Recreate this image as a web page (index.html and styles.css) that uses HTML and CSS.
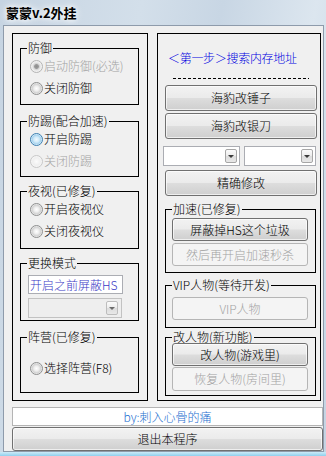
FILE: index.html
```html
<!DOCTYPE html>
<html lang="zh">
<head>
<meta charset="utf-8">
<title>蒙蒙v.2外挂</title>
<link rel="stylesheet" href="styles.css">
</head>
<body>
<div class="titlebar"><span class="title">蒙蒙v.2外挂</span></div>
<div class="client">
  <div class="panels">
    <div class="panel panel-left">
      <div class="group g1">
        <div class="legend">防御</div>
        <div class="radio dis"><span class="dot dot-checked"></span>启动防御(必选)</div>
        <div class="radio"><span class="dot"></span>关闭防御</div>
      </div>
      <div class="group g2">
        <div class="legend">防踢(配合加速)</div>
        <div class="radio"><span class="dot dot-focus"></span>开启防踢</div>
        <div class="radio dis"><span class="dot dot-dis"></span>关闭防踢</div>
      </div>
      <div class="group g3">
        <div class="legend">夜视(已修复)</div>
        <div class="radio"><span class="dot"></span>开启夜视仪</div>
        <div class="radio"><span class="dot"></span>关闭夜视仪</div>
      </div>
      <div class="group g4">
        <div class="legend">更换模式</div>
        <div class="textbox">开启之前屏蔽HS</div>
        <div class="combo combo-dis"><span class="drop drop-dis"></span></div>
      </div>
      <div class="group g5">
        <div class="legend">阵营(已修复)</div>
        <div class="radio"><span class="dot"></span>选择阵营(F8)</div>
      </div>
    </div>
    <div class="panel panel-right">
      <div class="step">＜第一步＞搜索内存地址</div>
      <div class="dash"></div>
      <div class="btn wide b1">海豹改锤子</div>
      <div class="btn wide b2">海豹改银刀</div>
      <div class="combos">
        <div class="combo combo-a"><span class="drop"></span></div>
        <div class="combo combo-b"><span class="drop"></span></div>
      </div>
      <div class="btn wide b3">精确修改</div>
      <div class="group rg speed">
        <div class="legend">加速(已修复)</div>
        <div class="btn inner first">屏蔽掉HS这个垃圾</div>
        <div class="btn inner dis">然后再开启加速秒杀</div>
      </div>
      <div class="group rg vip">
        <div class="legend">VIP人物(等待开发)</div>
        <div class="btn inner dis vipbtn">VIP人物</div>
      </div>
      <div class="group rg change">
        <div class="legend">改人物(新功能)</div>
        <div class="btn inner ch1">改人物(游戏里)</div>
        <div class="btn inner dis ch2">恢复人物(房间里)</div>
      </div>
    </div>
  </div>
  <div class="byline">by:刺入心骨的痛</div>
  <div class="btn exit">退出本程序</div>
</div>
<div class="strip"></div>
</body>
</html>
```
FILE: styles.css
```css
* { box-sizing: border-box; }
html, body { margin: 0; padding: 0; }
body {
  width: 326px;
  height: 456px;
  overflow: hidden;
  font-family: "Noto Sans CJK SC", "Noto Sans", sans-serif;
  font-size: 12px;
  font-weight: 300;
  color: #000;
  background: linear-gradient(100deg, #c6d4e2 0%, #d3dfea 35%, #c8d6e4 55%, #dce6ef 78%, #c4d3e2 100%);
  display: flex;
  flex-direction: column;
}
.titlebar {
  height: 25px;
  flex: none;
  padding-left: 6px;
  display: flex;
  align-items: center;
}
.title {
  font-weight: bold;
  font-size: 13px;
  line-height: 16px;
  text-shadow: 0 0 5px #fff, 0 0 8px #fff;
}
.client {
  flex: none;
  margin: 0 2px 0 3px;
  height: 427px;
  border: 1px solid #8e9bab;
  background: #f0f0f0;
  padding: 7px 0 0 8px;
  display: flex;
  flex-direction: column;
}
.panels {
  display: flex;
  gap: 9px;
  height: 368px;
  flex: none;
}
.panel {
  border: 1px solid #000;
  display: flex;
  flex-direction: column;
  height: 368px;
}
.panel-left { width: 136px; padding-left: 7px; }
.panel-right { width: 164px; }

.group {
  border: 1px solid #000;
  display: flex;
  flex-direction: column;
  flex: none;
}
.panel-left .group { width: 119px; }
.g1 { margin-top: 14px; height: 57px; padding-top: 1px; }
.g2 { margin-top: 16px; height: 56px; }
.g3 { margin-top: 14px; height: 58px; }
.g4 { margin-top: 14px; height: 58px; }
.g5 { margin-top: 16px; height: 56px; }

.legend {
  margin: -8px 0 0 6px;
  padding: 0 1px;
  height: 14px;
  line-height: 14px;
  background: #f0f0f0;
  align-self: flex-start;
  white-space: nowrap;
}
.g1 .legend { margin-top: -9px; }

.radio {
  display: flex;
  align-items: center;
  height: 22px;
  padding-left: 9px;
  line-height: 14px;
  white-space: nowrap;
}
.g5 .radio { margin-top: 13px; }
.radio.dis { color: #a3a3a3; }
.dot {
  width: 13px;
  height: 13px;
  flex: none;
  margin-right: 1px;
  border-radius: 50%;
  border: 1px solid #8e8f8f;
  background: radial-gradient(circle closest-side, #ffffff 0%, #eeeeee 45%, #d2d2d2 80%, #efefef 100%);
}
.dot-checked {
  border-color: #b4b4b4;
  background: radial-gradient(circle closest-side, #8d8d8d 0%, #9a9a9a 36%, #cfcfcf 50%, #e9e9e9 75%, #f4f4f4 100%);
}
.dot-focus {
  border-color: #3c7fb1;
  background: radial-gradient(circle closest-side, #f0f9fe 0%, #cfe9f8 50%, #a6d3ef 80%, #e3f2fb 100%);
}
.dot-dis {
  border-color: #c8c8c8;
  background: radial-gradient(circle closest-side, #fbfbfb 0%, #efefef 70%, #f6f6f6 100%);
}

.textbox {
  margin: 5px 0 0 7px;
  width: 95px;
  height: 19px;
  border: 1px solid #abadb3;
  background: #fff;
  color: #3a3ac6;
  line-height: 17px;
  padding-left: 1px;
  white-space: nowrap;
}
.combo {
  height: 20px;
  border: 1px solid #abadb3;
  background: #fff;
  display: flex;
  align-items: center;
  justify-content: flex-end;
  padding-right: 2px;
}
.combo-dis {
  margin: 4px 0 0 7px;
  width: 94px;
  border-color: #c2c2c2;
  background: #eeeeee;
  padding-right: 3px;
}
.drop {
  width: 12px;
  height: 14px;
  border: 1px solid #a6a6a6;
  border-radius: 2px;
  background: linear-gradient(#fbfbfb, #ececec 50%, #dcdcdc 51%, #e8e8e8);
  display: flex;
  align-items: center;
  justify-content: center;
}
.drop::after {
  content: "";
  width: 0;
  height: 0;
  border-left: 3px solid transparent;
  border-right: 3px solid transparent;
  border-top: 3px solid #3a3a3a;
}
.drop-dis { border-color: #bdbdbd; }
.drop-dis::after { border-top-color: #6c6c6c; }

.step {
  margin: 17px 0 0 10px;
  height: 14px;
  line-height: 14px;
  color: #0000e0;
  white-space: nowrap;
  letter-spacing: -0.3px;
}
.dash {
  margin: 13px 0 0 15px;
  width: 136px;
  height: 1px;
  flex: none;
  background: repeating-linear-gradient(90deg, #000 0 3px, transparent 3px 5px);
}
.btn {
  display: flex;
  align-items: center;
  justify-content: center;
  flex: none;
  border: 1px solid #707070;
  border-radius: 3px;
  background: linear-gradient(#f2f2f2 0%, #ebebeb 48%, #dddddd 52%, #cfcfcf 100%);
  box-shadow: inset 0 0 0 1px rgba(255, 255, 255, 0.65);
  line-height: 14px;
  white-space: nowrap;
}
.btn.dis {
  border-color: #b5b5b5;
  background: #f4f4f4;
  box-shadow: none;
  color: #a3a3a3;
}
.btn.wide { margin-left: 7px; width: 152px; height: 26px; }
.b1 { margin-top: 6px; }
.b2 { margin-top: 2px; }
.b3 { margin-top: 4px; }
.combos {
  display: flex;
  gap: 4px;
  margin: 7px 0 0 5px;
  flex: none;
}
.combo-a { width: 77px; }
.combo-b { width: 72px; }

.rg { margin-left: 7px; width: 151px; }
.speed { margin-top: 13px; height: 64px; }
.vip { margin-top: 12px; height: 43px; }
.change { margin-top: 9px; height: 59px; }
.btn.inner { margin: 2px 0 0 6px; width: 136px; height: 23px; }
.btn.vipbtn { margin-top: 5px; }
.btn.ch1 { margin-top: -1px; }
.btn.ch2 { margin-top: 1px; height: 24px; }

.byline {
  margin-top: 6px;
  width: 311px;
  height: 19px;
  flex: none;
  border: 1px solid #b4b4b4;
  background: #fff;
  color: #1e6fd0;
  text-align: center;
  line-height: 17px;
}
.btn.exit {
  margin-top: 1px;
  width: 311px;
  height: 24px;
}
.strip {
  flex: none;
  height: 4px;
  background: linear-gradient(#cdebf8, #8fd0ee);
}
```
